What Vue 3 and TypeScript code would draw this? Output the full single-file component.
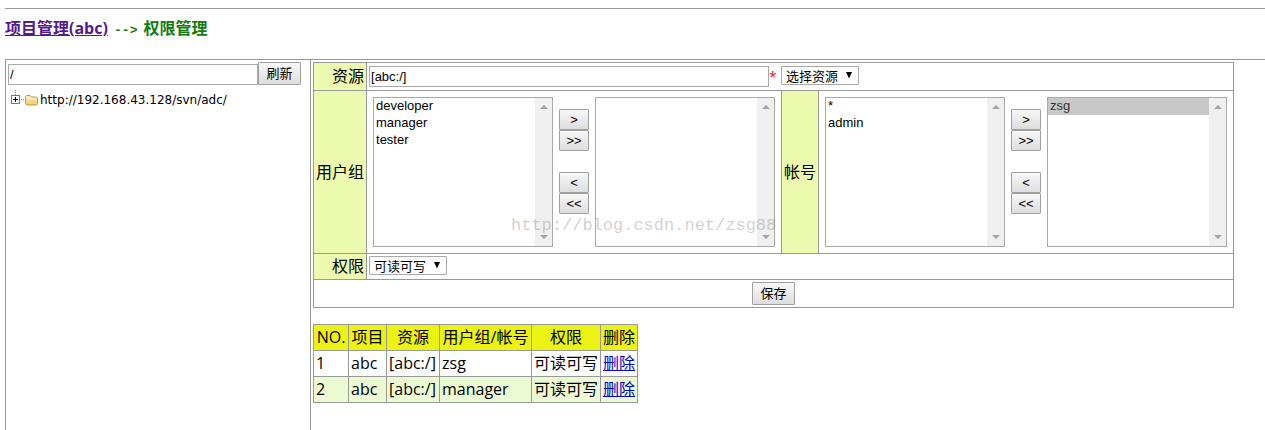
<script setup lang="ts">
import { ref } from 'vue'

interface Picker {
  id: string
  label: string
  available: string[]
  chosen: string[]
}

interface Grant {
  no: number
  project: string
  resource: string
  target: string
  access: string
}

const path = ref('/')
const resource = ref('[abc:/]')
const resourceChoice = ref('选择资源')
const access = ref('可读可写')

const pickers: Picker[] = [
  { id: 'groups', label: '用户组', available: ['developer', 'manager', 'tester'], chosen: [] },
  { id: 'users', label: '帐号', available: ['*', 'admin'], chosen: ['zsg'] },
]
const moves = [['>', '>>'], ['<', '<<']]

const headings = ['NO.', '项目', '资源', '用户组/帐号', '权限', '删除']
const grants: Grant[] = [
  { no: 1, project: 'abc', resource: '[abc:/]', target: 'zsg', access: '可读可写' },
  { no: 2, project: 'abc', resource: '[abc:/]', target: 'manager', access: '可读可写' },
]
</script>

<template>
  <div class="page">
    <hr class="rule" />
    <h1 class="crumbs"><a class="visited" href="#">项目管理(abc)</a> <span class="sep">--&gt;</span> 权限管理</h1>

    <div class="frame">
      <aside class="side">
        <form class="path-row" @submit.prevent>
          <input v-model="path" class="text path" type="text" aria-label="路径" />
          <button class="btn wide" type="submit">刷新</button>
        </form>
        <div class="tree">
          <svg class="toggle" width="14" height="20" viewBox="0 0 14 20" aria-hidden="true">
            <path d="M4.500 0v5M10 9.500h4" stroke="#888" stroke-dasharray="1 1" fill="none" />
            <rect x="0.500" y="5.500" width="8" height="8" fill="#fff" stroke="#777" />
            <path d="M2 9.500h5M4.500 7v5" stroke="#000" fill="none" />
          </svg>
          <svg class="folder" width="13" height="12" viewBox="0 0 13 12" aria-hidden="true">
            <defs>
              <linearGradient id="folderFill" x1="0" y1="0" x2="0" y2="1">
                <stop offset="0" stop-color="#fff0b8" />
                <stop offset="1" stop-color="#f3c66c" />
              </linearGradient>
            </defs>
            <path d="M.5 9.500V2.500L1.500 1.500H5L6.500 3H11L12.500 4V10L11.500 11H2Z" fill="url(#folderFill)" stroke="#c9963f" />
            <path d="M2 4.500H11.500" stroke="#fff6d4" />
          </svg>
          <span>http://192.168.43.128/svn/adc/</span>
        </div>
      </aside>

      <main class="main">
        <form @submit.prevent>
          <table class="grid form">
            <tbody>
              <tr>
                <th class="label" scope="row"><label for="resource">资源</label></th>
                <td colspan="3">
                  <div class="resource-row">
                    <input id="resource" v-model="resource" class="text resource" type="text" />
                    <span class="star">*</span>
                    <span class="drop">
                      <select v-model="resourceChoice" aria-label="选择资源">
                        <option>选择资源</option>
                      </select>
                      <svg class="arrow" width="8" height="7" viewBox="0 0 8 7" aria-hidden="true"><path d="M1 0H7L4 6.500Z" /></svg>
                    </span>
                  </div>
                </td>
              </tr>
              <tr>
                <template v-for="p in pickers" :key="p.id">
                  <th class="label" scope="row"><label :for="p.id">{{ p.label }}</label></th>
                  <td>
                    <div class="picker">
                      <div class="list">
                        <select :id="p.id" multiple>
                          <option v-for="o in p.available" :key="o">{{ o }}</option>
                        </select>
                        <div class="bar">
                          <svg width="8" height="4" viewBox="0 0 8 4" aria-hidden="true"><path d="M0 4L4 0L8 4Z" /></svg>
                          <svg width="8" height="4" viewBox="0 0 8 4" aria-hidden="true"><path d="M0 0L4 4L8 0Z" /></svg>
                        </div>
                      </div>
                      <div class="moves">
                        <div v-for="(pair, i) in moves" :key="i" class="pair">
                          <button v-for="m in pair" :key="m" class="btn move" type="button">{{ m }}</button>
                        </div>
                      </div>
                      <div class="list">
                        <select multiple :aria-label="p.label">
                          <option v-for="o in p.chosen" :key="o" selected>{{ o }}</option>
                        </select>
                        <div class="bar">
                          <svg width="8" height="4" viewBox="0 0 8 4" aria-hidden="true"><path d="M0 4L4 0L8 4Z" /></svg>
                          <svg width="8" height="4" viewBox="0 0 8 4" aria-hidden="true"><path d="M0 0L4 4L8 0Z" /></svg>
                        </div>
                      </div>
                    </div>
                  </td>
                </template>
              </tr>
              <tr>
                <th class="label" scope="row"><label for="access">权限</label></th>
                <td colspan="3">
                  <span class="drop">
                    <select id="access" v-model="access">
                      <option>可读可写</option>
                    </select>
                    <svg class="arrow" width="8" height="7" viewBox="0 0 8 7" aria-hidden="true"><path d="M1 0H7L4 6.500Z" /></svg>
                  </span>
                </td>
              </tr>
              <tr>
                <td class="save" colspan="4"><button class="btn wide" type="submit">保存</button></td>
              </tr>
            </tbody>
          </table>
        </form>

        <table class="grid grants">
          <colgroup>
            <col class="c-no" /><col class="c-project" /><col class="c-resource" />
            <col class="c-target" /><col class="c-access" /><col class="c-delete" />
          </colgroup>
          <thead>
            <tr><th v-for="h in headings" :key="h" scope="col">{{ h }}</th></tr>
          </thead>
          <tbody>
            <tr v-for="g in grants" :key="g.no">
              <td>{{ g.no }}</td>
              <td>{{ g.project }}</td>
              <td>{{ g.resource }}</td>
              <td>{{ g.target }}</td>
              <td>{{ g.access }}</td>
              <td><a href="#">删除</a></td>
            </tr>
          </tbody>
        </table>
        <div class="watermark">http://blog.csdn.net/zsg88</div>
      </main>
    </div>
  </div>
</template>

<style>
body {
  margin: 0;
  background: #fff;
}
</style>

<style scoped>
.page {
  box-sizing: border-box;
  display: flex;
  flex-direction: column;
  min-height: 100vh;
  padding: 8px 0 0 5px;
  color: #000;
  font: 16px/21px "Open Sans", "Noto Sans CJK SC", sans-serif;
}
.rule {
  width: 100%;
  margin: 0;
  border: 0;
  border-top: 1px solid #999;
}
.crumbs {
  margin: 8px 0 20px;
  color: #107c10;
  font-size: 16px;
  line-height: 22px;
}
.sep {
  margin: 0 2px;
  font: bold 13px "Liberation Mono", monospace;
}
a {
  color: #0000cc;
}
.visited {
  color: #551a8b;
}
.frame {
  display: flex;
  flex: 1;
  border: solid #999;
  border-width: 1px 0 0 1px;
}
.side {
  flex: none;
  box-sizing: border-box;
  width: 305px;
  padding: 2px;
  border-right: 1px solid #999;
}
.main {
  position: relative;
  flex: 1;
  padding: 2px;
}
.path-row {
  display: flex;
  align-items: flex-end;
}
.text {
  box-sizing: border-box;
  height: 21px;
  margin: 0;
  padding: 1px;
  border: 1px solid #a9a9a9;
  border-radius: 0;
  background: #fff;
  color: #000;
  font: 13px "Liberation Sans", "Noto Sans CJK SC", sans-serif;
}
.path {
  width: 250px;
}
.resource {
  width: 400px;
}
.btn {
  box-sizing: border-box;
  margin: 0;
  padding: 0;
  border: 1px solid #a0a0a0;
  border-radius: 1px;
  background: linear-gradient(#f8f8f8, #dddddd);
  color: #000;
  font: 13px "Liberation Sans", "Noto Sans CJK SC", sans-serif;
}
.wide {
  width: 43px;
  height: 23px;
  line-height: 21px;
}
.move {
  width: 30px;
  height: 21px;
}
.tree {
  display: flex;
  align-items: center;
  padding: 4px 3px;
  font: 12px/22px "DejaVu Sans", "Noto Sans CJK SC", sans-serif;
}
.folder {
  margin-right: 2px;
}
.grid {
  border-collapse: collapse;
}
.grid th,
.grid td {
  padding: 2px;
  border: 1px solid #999;
  font-weight: 400;
  text-align: left;
  white-space: nowrap;
}
.form .label {
  background: #ebfaae;
  text-align: right;
}
.resource-row {
  display: flex;
  align-items: center;
  height: 23px;
}
.star {
  width: 12px;
  color: #e02020;
  font-size: 14px;
}
.drop {
  position: relative;
  display: flex;
  width: 78px;
  margin-bottom: 2px;
}
.drop select {
  box-sizing: border-box;
  width: 100%;
  height: 19px;
  margin: 0;
  padding: 0 20px 0 4px;
  appearance: none;
  border: 1px solid #a9a9a9;
  border-radius: 1px;
  background: #fff;
  color: #000;
  font: 13px/17px "Noto Sans CJK SC", sans-serif;
}
.arrow {
  position: absolute;
  top: 6px;
  right: 6px;
  pointer-events: none;
}
.picker {
  display: flex;
  gap: 6px;
  padding: 4px;
}
.list {
  box-sizing: border-box;
  display: flex;
  width: 180px;
  height: 150px;
  border: 1px solid #a9a9a9;
}
.list select {
  flex: 1;
  min-width: 0;
  height: 100%;
  margin: 0;
  padding: 0;
  border: 0;
  border-radius: 0;
  outline: 0;
  background: #fff;
  overflow: hidden;
  font: 13px "Liberation Sans", "Noto Sans CJK SC", sans-serif;
}
.list option {
  min-height: 17px;
  height: 17px;
  padding: 0 2px;
  color: #000;
  line-height: 17px;
}
.list option:checked {
  background: #c8c8c8 linear-gradient(#c8c8c8, #c8c8c8);
  color: #333;
}
.bar {
  box-sizing: border-box;
  display: flex;
  flex-direction: column;
  align-items: center;
  justify-content: space-between;
  width: 17px;
  padding: 7px 0;
  background: #f0f0f0;
  fill: #a3a3a3;
}
.moves {
  display: flex;
  flex-direction: column;
  gap: 21px;
  padding-top: 12px;
}
.pair {
  display: flex;
  flex-direction: column;
}
.form .save {
  text-align: center;
}
.save .btn {
  display: block;
  margin: 0 auto;
}
.grants {
  margin-top: 16px;
}
.grants thead th {
  background: #ecf212;
  text-align: center;
}
.grants tbody tr:nth-child(even) {
  background: #ebfad2;
}
.c-no { width: 35px; }
.c-project { width: 38px; }
.c-resource { width: 53px; }
.c-target { width: 92px; }
.c-access { width: 69px; }
.c-delete { width: 37px; }
.watermark {
  position: absolute;
  top: 155px;
  left: 200px;
  color: rgba(120, 120, 120, 0.35);
  font: 17px/22px "Liberation Mono", monospace;
  pointer-events: none;
}
</style>
